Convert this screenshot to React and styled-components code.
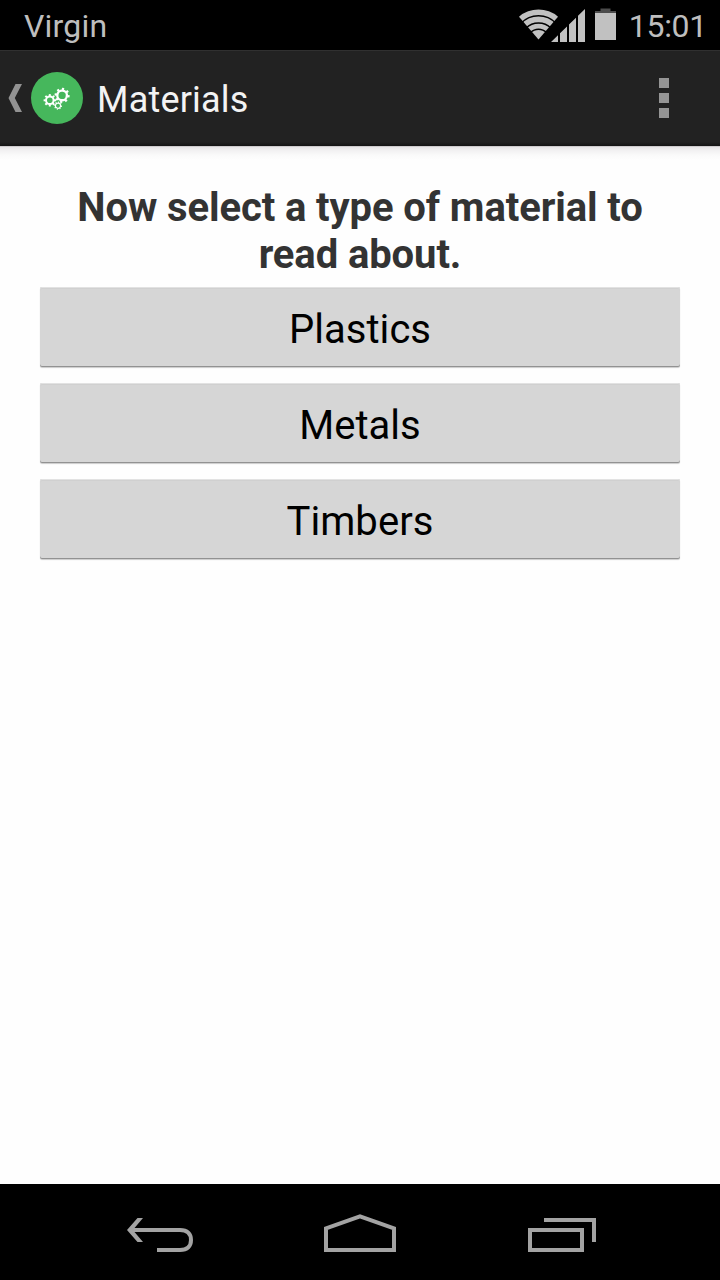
import styled, { createGlobalStyle } from "styled-components";

const GlobalStyle = createGlobalStyle`
  * {
    box-sizing: border-box;
  }

  body {
    margin: 0;
    font-family: Roboto, "Noto Sans", sans-serif;
    background: #fff;
  }
`;

const Screen = styled.div`
  width: 720px;
  height: 1280px;
  display: flex;
  flex-direction: column;
  background: #fdfdfd;
  overflow: hidden;
`;

const StatusBar = styled.div`
  flex: none;
  height: 50px;
  padding: 0 13px 0 24px;
  display: flex;
  align-items: center;
  justify-content: space-between;
  background: #000;
  color: #bebebe;
`;

const StatusText = styled.span`
  font-size: 32px;
  line-height: 38px;
  padding-top: 1px;
  letter-spacing: ${(props) => props.$spacing || "0"};
`;

const StatusIcons = styled.div`
  display: flex;
  align-items: center;

  svg {
    flex: none;
  }
`;

const Signals = styled.div`
  display: flex;
  align-items: center;
  margin-right: 10px;

  svg + svg {
    margin-left: -7px;
  }
`;

const Battery = styled.div`
  display: flex;
  margin-right: 13px;
`;

const ActionBar = styled.header`
  flex: none;
  height: 96px;
  padding: 0 51px 0 8px;
  display: flex;
  align-items: center;
  background: linear-gradient(
    #303030 0,
    #303030 1px,
    #222 1px,
    #222 92px,
    #141414 96px
  );
`;

const UpButton = styled.button`
  display: flex;
  align-items: center;
  gap: 8px;
  padding: 0;
  border: none;
  background: none;
`;

const Title = styled.h1`
  flex: 1;
  margin: 0 0 0 14px;
  padding-top: 3px;
  font-size: 36px;
  font-weight: 400;
  line-height: 42px;
  letter-spacing: 0.2px;
  color: #f3f3f3;
`;

const OverflowButton = styled.button`
  display: flex;
  flex-direction: column;
  gap: 5px;
  padding: 0;
  border: none;
  background: none;
`;

const Dot = styled.span`
  width: 10px;
  height: 10px;
  background: #959595;
`;

const Content = styled.main`
  flex: 1;
  padding: 38px 40px 0;
  background: linear-gradient(
    #b5b2b4 0,
    #e8e6e8 1px,
    #f1f0f1 4px,
    #fafafa 9px,
    #fefefe 14px
  );
`;

const Heading = styled.h2`
  margin: 0 0 9px;
  font-size: 40px;
  font-weight: 700;
  line-height: 47px;
  letter-spacing: -0.1px;
  text-align: center;
  color: #333;
`;

const MaterialList = styled.div`
  display: flex;
  flex-direction: column;
  gap: 16px;
`;

const MaterialButton = styled.button`
  height: 80px;
  padding: 5px 0 0;
  border: none;
  border-radius: 2px;
  background: #d6d6d6;
  box-shadow:
    inset 0 1px 0 #e2e2e2,
    inset 0 2px 0 #d0d0d0,
    inset 0 -1px 0 #929292,
    0 1px 1px rgba(0, 0, 0, 0.2);
  font-family: inherit;
  font-size: 40px;
  line-height: 47px;
  letter-spacing: 0.05px;
  color: #000;
`;

const NavBar = styled.nav`
  flex: none;
  height: 96px;
  padding: 4px 124px 0;
  display: flex;
  align-items: center;
  justify-content: space-between;
  background: #000;
`;

const NavButton = styled.button`
  display: flex;
  padding: 0;
  border: none;
  background: none;
`;

const WifiIcon = () => (
  <svg width="39" height="32" viewBox="0 0 39 32">
    <path d="M0 7.7A30 30 0 0 1 39 7.7L19.5 30.500Z" fill="#c1c1c1" />
    <g fill="none" stroke="#000" strokeWidth="1.5">
      <path d="M2 14.300A24 24 0 0 1 37 14.300" />
      <path d="M7 19.200A17.500 17.500 0 0 1 32 19.200" />
      <path d="M11.500 23.600A11.200 11.200 0 0 1 27.500 23.600" />
    </g>
  </svg>
);

const SignalIcon = () => (
  <svg width="34" height="33" viewBox="0 0 34 33">
    <path
      d="M0 33L7 26.2V33ZM9 33V24.3L16 17.5V33ZM18 33V15.5L25 8.7V33ZM27 33V6.8L34 0V33Z"
      fill="#c1c1c1"
    />
  </svg>
);

const BatteryIcon = () => (
  <svg width="21" height="34" viewBox="0 0 21 34">
    <path d="M5.500 0.500H15.500V3H21V5H0V3H5.500Z" fill="#4c4c4c" />
    <path d="M0 5H21V32H0Z" fill="#c1c1c1" />
  </svg>
);

const BackChevron = () => (
  <svg width="15" height="28" viewBox="0 0 15 28">
    <path d="M7.5 0H14L6.8 14L14 28H7.5L0.5 14Z" fill="#929292" />
  </svg>
);

const Gear = ({ cx, cy, r, ring, teeth, turn = 0 }) => (
  <g transform={`translate(${cx} ${cy}) rotate(${turn})`}>
    <circle r={r} fill="none" stroke="#fff" strokeWidth={ring} />
    {Array.from({ length: teeth }, (_, i) => (
      <rect
        key={i}
        x={-ring * 0.5}
        y={-r - ring * 1.2}
        width={ring}
        height={ring}
        fill="#fff"
        transform={`rotate(${(360 / teeth) * i})`}
      />
    ))}
  </g>
);

const AppIcon = () => (
  <svg width="52" height="52" viewBox="0 0 52 52">
    <circle cx="26" cy="26" r="26" fill="#46b75c" />
    <Gear cx={18.8} cy={28.3} r={3.8} ring={2} teeth={8} />
    <Gear cx={31.1} cy={23.4} r={4.8} ring={2.3} teeth={8} turn={8} />
    <Gear cx={27} cy={33.7} r={2.6} ring={1.2} teeth={8} turn={10} />
  </svg>
);

const BackIcon = () => (
  <svg width="72" height="40" viewBox="0 0 72 40">
    <path
      d="M6 16H56C63.500 16 67 20 67 26S63.500 36 56 36H33"
      fill="none"
      stroke="#a3a3a3"
      strokeWidth="4"
    />
    <path d="M13.5 4H19L8.8 16L19 28H13.5L3 16Z" fill="#a3a3a3" />
  </svg>
);

const HomeIcon = () => (
  <svg width="72" height="40" viewBox="0 0 72 40">
    <path
      d="M2 36V14.300L36 2.300L70 14.300V36Z"
      fill="none"
      stroke="#a3a3a3"
      strokeWidth="4"
    />
  </svg>
);

const RecentsIcon = () => (
  <svg width="72" height="40" viewBox="0 0 72 40">
    <g fill="none" stroke="#a3a3a3" strokeWidth="4">
      <path d="M6 16H58V36H6Z" />
      <path d="M20 6H70V28" />
    </g>
  </svg>
);

const materials = ["Plastics", "Metals", "Timbers"];

const App = () => {
  return (
    <>
      <GlobalStyle />
      <Screen>
        <StatusBar>
          <StatusText $spacing="0.2px">Virgin</StatusText>
          <StatusIcons>
            <Signals>
              <WifiIcon />
              <SignalIcon />
            </Signals>
            <Battery>
              <BatteryIcon />
            </Battery>
            <StatusText $spacing="-0.3px">15:01</StatusText>
          </StatusIcons>
        </StatusBar>
        <ActionBar>
          <UpButton aria-label="Navigate up">
            <BackChevron />
            <AppIcon />
          </UpButton>
          <Title>Materials</Title>
          <OverflowButton aria-label="More options">
            <Dot />
            <Dot />
            <Dot />
          </OverflowButton>
        </ActionBar>
        <Content>
          <Heading>Now select a type of material to read about.</Heading>
          <MaterialList>
            {materials.map((name) => (
              <MaterialButton key={name}>{name}</MaterialButton>
            ))}
          </MaterialList>
        </Content>
        <NavBar>
          <NavButton aria-label="Back">
            <BackIcon />
          </NavButton>
          <NavButton aria-label="Home">
            <HomeIcon />
          </NavButton>
          <NavButton aria-label="Recent apps">
            <RecentsIcon />
          </NavButton>
        </NavBar>
      </Screen>
    </>
  );
};

export default App;
